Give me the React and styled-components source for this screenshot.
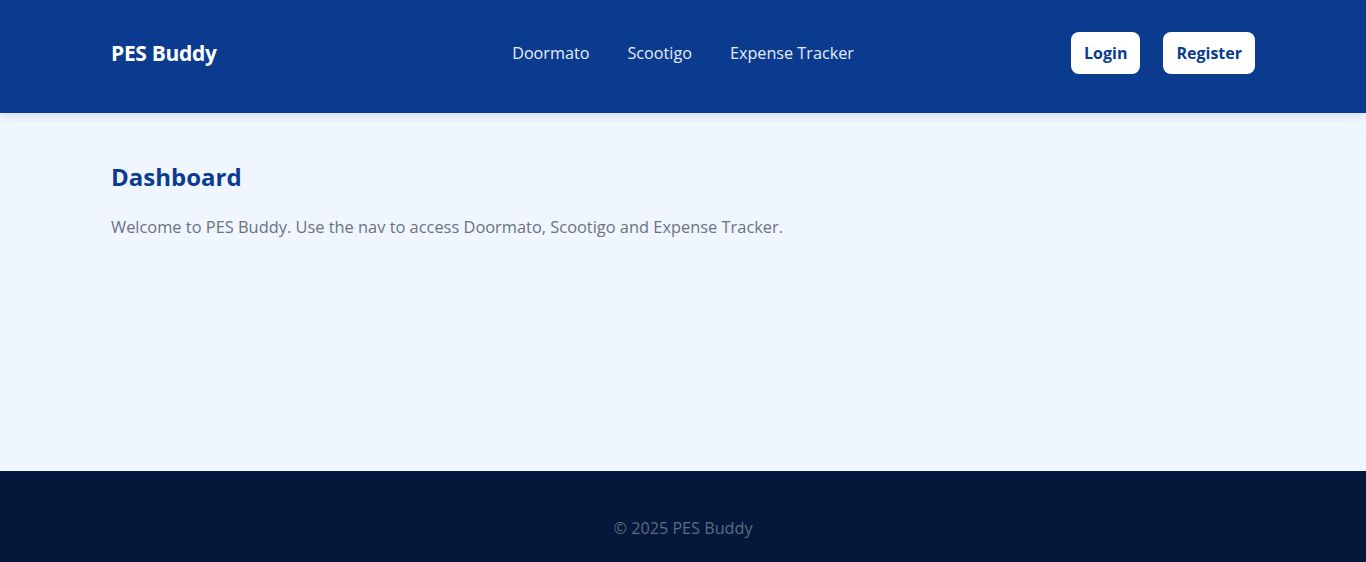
import React from "react";
import styled, { createGlobalStyle } from "styled-components";

const Global = createGlobalStyle`
  * { box-sizing: border-box; }
  html, body { margin: 0; padding: 0; }
  body {
    font-family: "Open Sans", "Noto Sans", sans-serif;
    background: #eff6ff;
  }
`;

const Page = styled.div`
  min-height: 562px;
  display: flex;
  flex-direction: column;
`;

const Header = styled.header`
  height: 113px;
  padding-bottom: 7px;
  background: #0b3b8f;
  box-shadow: 0 2px 10px rgba(11, 59, 143, 0.15);
  position: relative;
  z-index: 1;
`;

const Container = styled.div`
  max-width: 1200px;
  margin: 0 auto;
  padding: 0 28px;
`;

const HeaderInner = styled(Container)`
  height: 100%;
  display: grid;
  grid-template-columns: 1fr auto 1fr;
  align-items: center;
`;

const Logo = styled.div`
  color: #ffffff;
  font-weight: 700;
  font-size: 21px;
  letter-spacing: -0.3px;
`;

const Nav = styled.nav`
  display: flex;
  gap: 38px;
`;

const NavLink = styled.a`
  color: #e6edf9;
  font-size: 16.2px;
  text-decoration: none;
`;

const Actions = styled.div`
  display: flex;
  justify-content: flex-end;
  gap: 23px;
`;

const Button = styled.button`
  height: 42px;
  padding: 0 13px;
  border: none;
  border-radius: 8px;
  background: #ffffff;
  color: #0b3b8f;
  font-family: inherit;
  font-weight: 700;
  font-size: 16px;
`;

const Main = styled.main`
  flex: 1;
  background: #eff6ff;
`;

const Content = styled(Container)`
  padding-top: 47px;
`;

const Title = styled.h2`
  margin: 0;
  color: #0b3b8f;
  font-size: 24px;
  font-weight: 700;
  line-height: 34px;
`;

const Text = styled.p`
  margin: 21px 0 0;
  color: #6b7280;
  font-size: 16.4px;
  line-height: 24px;
`;

const Footer = styled.footer`
  height: 91px;
  background: #03183a;
  display: flex;
  align-items: flex-start;
  justify-content: center;
  padding-top: 45px;
  color: #5f6b80;
  font-size: 16.2px;
  line-height: 24px;
`;

export default function App() {
  return (
    <Page>
      <Global />
      <Header>
        <HeaderInner>
          <Logo>PES Buddy</Logo>
          <Nav>
            <NavLink href="#">Doormato</NavLink>
            <NavLink href="#">Scootigo</NavLink>
            <NavLink href="#">Expense Tracker</NavLink>
          </Nav>
          <Actions>
            <Button>Login</Button>
            <Button>Register</Button>
          </Actions>
        </HeaderInner>
      </Header>
      <Main>
        <Content>
          <Title>Dashboard</Title>
          <Text>
            Welcome to PES Buddy. Use the nav to access Doormato, Scootigo and Expense Tracker.
          </Text>
        </Content>
      </Main>
      <Footer>© 2025 PES Buddy</Footer>
    </Page>
  );
}
